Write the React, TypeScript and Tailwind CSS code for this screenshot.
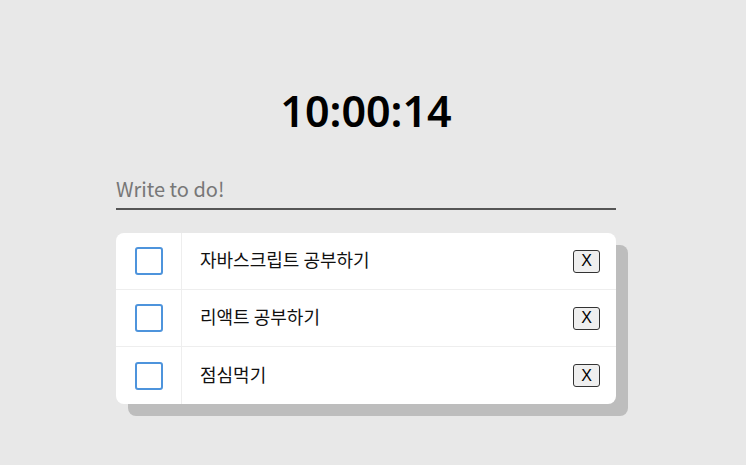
const TODOS = ["자바스크립트 공부하기", "리액트 공부하기", "점심먹기"];

const FONT = "font-['Noto_Sans_CJK_KR','Noto_Sans',sans-serif]";

function TodoRow({ text, last }: { text: string; last: boolean }) {
  return (
    <li className={`flex h-[57px] items-center ${last ? "" : "border-b border-[#eeeeee]"}`}>
      <div className="flex h-full w-[66px] items-center justify-center border-r border-[#eeeeee]">
        <span className="block h-[28px] w-[28px] rounded-[3px] border-2 border-[#4e94dc] bg-white" />
      </div>
      <span className="flex-1 pb-[3px] pl-[18px] text-[18px] text-[#111]">{text}</span>
      <button className="mr-[16px] flex h-[23px] w-[27px] items-center justify-center rounded-[3px] border border-[#333] bg-[#efefef] font-['Liberation_Sans',sans-serif] text-[16px] leading-none text-black">
        X
      </button>
    </li>
  );
}

export default function App() {
  return (
    <div className={`min-h-[465px] w-full bg-[#e8e8e8] ${FONT}`}>
      <div className="ml-[116px] flex w-[500px] flex-col pt-[80px]">
        <h1 className="text-center font-['Noto_Sans',sans-serif] text-[43px] font-semibold leading-[62px] text-black">
          10:00:14
        </h1>
        <input
          className="mt-[28px] h-[40px] w-full border-b-2 border-[#555] bg-transparent pb-[2px] text-[20px] text-[#222] outline-none placeholder:text-[#777]"
          placeholder="Write to do!"
        />
        <ul className="mt-[23px] rounded-[8px] bg-white shadow-[12px_12px_0_#bdbdbd]">
          {TODOS.map((t, i) => (
            <TodoRow key={t} text={t} last={i === TODOS.length - 1} />
          ))}
        </ul>
      </div>
    </div>
  );
}
